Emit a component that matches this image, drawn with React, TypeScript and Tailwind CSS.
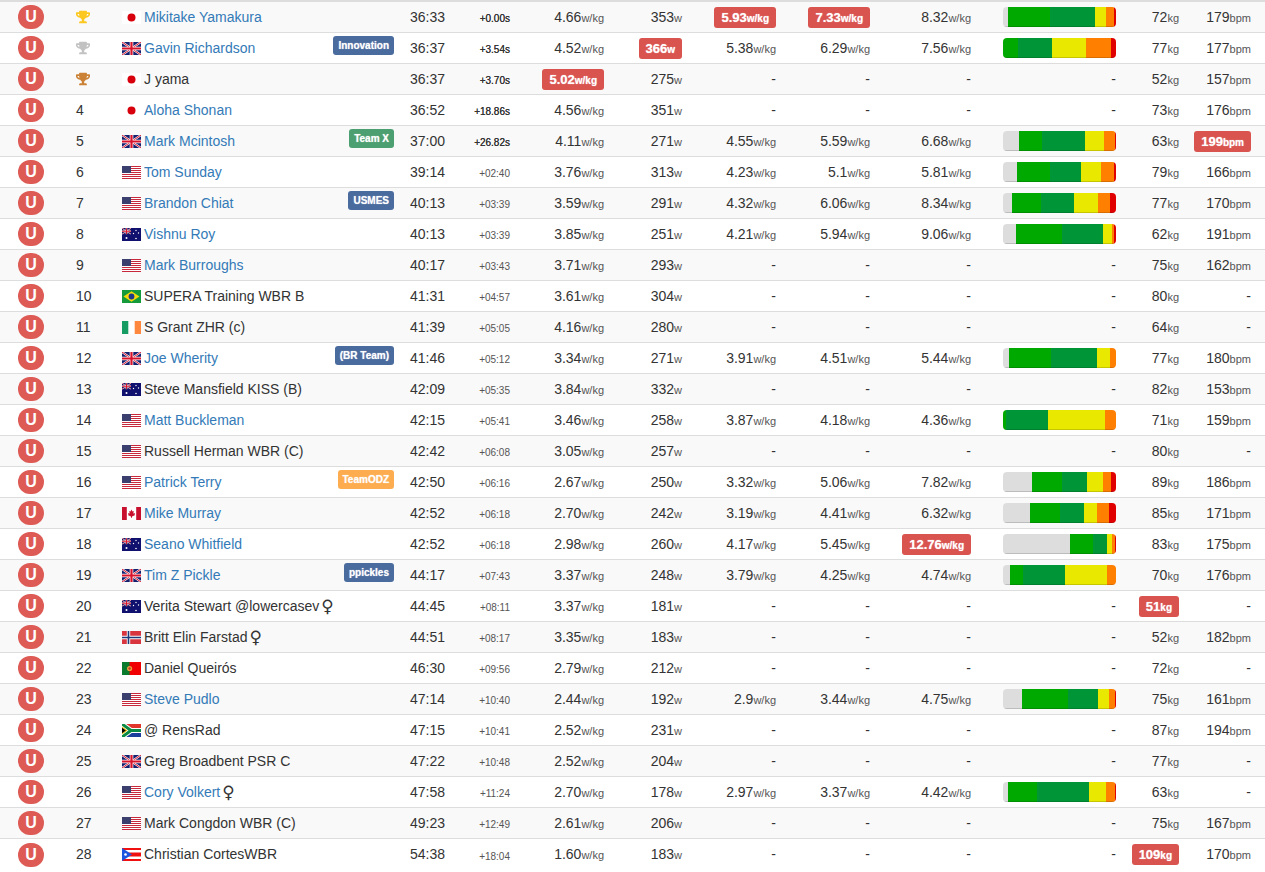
import type { ReactNode } from "react";
import { FaTrophy } from "react-icons/fa";

type Row = {
  name: string;
  flag: string;
  link?: boolean;
  female?: boolean;
  tag?: [string, string];
  time: string;
  gap: string;
  wkg: string;
  w: string;
  a?: string;
  b?: string;
  c?: string;
  bar?: number[];
  kg: string;
  bpm?: string;
};

const BLUE = "bg-[#4a6b9e]";
const GREEN = "bg-[#4c9f70]";
const ORANGE = "bg-[#fdad50]";

// a leading ! marks a value that shows as a red badge
const rows: Row[] = [
  { name: "Mikitake Yamakura", flag: "jp", link: true, time: "36:33", gap: "+0.00s", wkg: "4.66", w: "353", a: "!5.93", b: "!7.33", c: "8.32", bar: [15, 126, 135, 33, 24, 6], kg: "72", bpm: "179" },
  { name: "Gavin Richardson", flag: "gb", link: true, tag: ["Innovation", BLUE], time: "36:37", gap: "+3.54s", wkg: "4.52", w: "!366", a: "5.38", b: "6.29", c: "7.56", bar: [0, 44, 103, 102, 75, 15], kg: "77", bpm: "177" },
  { name: "J yama", flag: "jp", time: "36:37", gap: "+3.70s", wkg: "!5.02", w: "275", kg: "52", bpm: "157" },
  { name: "Aloha Shonan", flag: "jp", link: true, time: "36:52", gap: "+18.86s", wkg: "4.56", w: "351", kg: "73", bpm: "176" },
  { name: "Mark Mcintosh", flag: "gb", link: true, tag: ["Team X", GREEN], time: "37:00", gap: "+26.82s", wkg: "4.11", w: "271", a: "4.55", b: "5.59", c: "6.68", bar: [48, 69, 129, 57, 33, 3], kg: "63", bpm: "!199" },
  { name: "Tom Sunday", flag: "us", link: true, time: "39:14", gap: "+02:40", wkg: "3.76", w: "313", a: "4.23", b: "5.1", c: "5.81", bar: [42, 99, 93, 60, 39, 6], kg: "79", bpm: "166" },
  { name: "Brandon Chiat", flag: "us", link: true, tag: ["USMES", BLUE], time: "40:13", gap: "+03:39", wkg: "3.59", w: "291", a: "4.32", b: "6.06", c: "8.34", bar: [27, 87, 99, 72, 36, 18], kg: "77", bpm: "170" },
  { name: "Vishnu Roy", flag: "au", link: true, time: "40:13", gap: "+03:39", wkg: "3.85", w: "251", a: "4.21", b: "5.94", c: "9.06", bar: [39, 138, 123, 27, 6, 6], kg: "62", bpm: "191" },
  { name: "Mark Burroughs", flag: "us", link: true, time: "40:17", gap: "+03:43", wkg: "3.71", w: "293", kg: "75", bpm: "162" },
  { name: "SUPERA Training WBR B", flag: "br", time: "41:31", gap: "+04:57", wkg: "3.61", w: "304", kg: "80" },
  { name: "S Grant ZHR (c)", flag: "ie", time: "41:39", gap: "+05:05", wkg: "4.16", w: "280", kg: "64" },
  { name: "Joe Wherity", flag: "gb", link: true, tag: ["(BR Team)", BLUE], time: "41:46", gap: "+05:12", wkg: "3.34", w: "271", a: "3.91", b: "4.51", c: "5.44", bar: [18, 126, 138, 39, 18, 0], kg: "77", bpm: "180" },
  { name: "Steve Mansfield KISS (B)", flag: "au", time: "42:09", gap: "+05:35", wkg: "3.84", w: "332", kg: "82", bpm: "153" },
  { name: "Matt Buckleman", flag: "us", link: true, time: "42:15", gap: "+05:41", wkg: "3.46", w: "258", a: "3.87", b: "4.18", c: "4.36", bar: [0, 9, 126, 171, 33, 0], kg: "71", bpm: "159" },
  { name: "Russell Herman WBR (C)", flag: "us", time: "42:42", gap: "+06:08", wkg: "3.05", w: "257", kg: "80" },
  { name: "Patrick Terry", flag: "us", link: true, tag: ["TeamODZ", ORANGE], time: "42:50", gap: "+06:16", wkg: "2.67", w: "250", a: "3.32", b: "5.06", c: "7.82", bar: [87, 90, 75, 48, 24, 15], kg: "89", bpm: "186" },
  { name: "Mike Murray", flag: "ca", link: true, time: "42:52", gap: "+06:18", wkg: "2.70", w: "242", a: "3.19", b: "4.41", c: "6.32", bar: [81, 90, 72, 39, 36, 21], kg: "85", bpm: "171" },
  { name: "Seano Whitfield", flag: "au", link: true, time: "42:52", gap: "+06:18", wkg: "2.98", w: "260", a: "4.17", b: "5.45", c: "!12.76", bar: [201, 69, 42, 15, 9, 3], kg: "83", bpm: "175" },
  { name: "Tim Z Pickle", flag: "gb", link: true, tag: ["ppickles", BLUE], time: "44:17", gap: "+07:43", wkg: "3.37", w: "248", a: "3.79", b: "4.25", c: "4.74", bar: [21, 39, 126, 126, 27, 0], kg: "70", bpm: "176" },
  { name: "Verita Stewart @lowercasev", flag: "au", female: true, time: "44:45", gap: "+08:11", wkg: "3.37", w: "181", kg: "!51" },
  { name: "Britt Elin Farstad", flag: "no", female: true, time: "44:51", gap: "+08:17", wkg: "3.35", w: "183", kg: "52", bpm: "182" },
  { name: "Daniel Queirós", flag: "pt", time: "46:30", gap: "+09:56", wkg: "2.79", w: "212", kg: "72" },
  { name: "Steve Pudlo", flag: "us", link: true, time: "47:14", gap: "+10:40", wkg: "2.44", w: "192", a: "2.9", b: "3.44", c: "4.75", bar: [57, 138, 90, 33, 18, 3], kg: "75", bpm: "161" },
  { name: "@ RensRad", flag: "za", time: "47:15", gap: "+10:41", wkg: "2.52", w: "231", kg: "87", bpm: "194" },
  { name: "Greg Broadbent PSR C", flag: "gb", time: "47:22", gap: "+10:48", wkg: "2.52", w: "204", kg: "77" },
  { name: "Cory Volkert", flag: "us", link: true, female: true, time: "47:58", gap: "+11:24", wkg: "2.70", w: "178", a: "2.97", b: "3.37", c: "4.42", bar: [15, 87, 156, 51, 27, 3], kg: "63" },
  { name: "Mark Congdon WBR (C)", flag: "us", time: "49:23", gap: "+12:49", wkg: "2.61", w: "206", kg: "75", bpm: "167" },
  { name: "Christian CortesWBR", flag: "pr", time: "54:38", gap: "+18:04", wkg: "1.60", w: "183", kg: "!109", bpm: "170" },
];

const segColors = ["bg-[#dddddd]", "bg-[#00a900]", "bg-[#009637]", "bg-[#e8e800]", "bg-[#ff8000]", "bg-[#e00000]"];

const UK = () => (
  <>
    <rect width="19" height="13" fill="#14206e" />
    <path d="M0 0L19 13M19 0L0 13" stroke="#fff" strokeWidth="2" />
    <path d="M0 0L19 13M19 0L0 13" stroke="#d8142c" strokeWidth="1" />
    <path d="M9.5 0V13M0 6.5H19" stroke="#fff" strokeWidth="3.6" />
    <path d="M9.5 0V13M0 6.5H19" stroke="#d8142c" strokeWidth="2.2" />
  </>
);

const flags: Record<string, ReactNode> = {
  jp: (
    <>
      <rect width="19" height="13" fill="#fff" />
      <circle cx="9.5" cy="6.5" r="4" fill="#d8000c" />
    </>
  ),
  gb: <UK />,
  us: (
    <>
      <rect width="19" height="13" fill="#fff" />
      <path d="M0 .5H19M0 2.5H19M0 4.5H19M0 6.5H19M0 8.5H19M0 10.5H19M0 12.5H19" stroke="#c8283c" strokeWidth="1" />
      <rect width="9" height="7" fill="#3a3f6e" />
    </>
  ),
  au: (
    <>
      <rect width="19" height="13" fill="#10106e" />
      <svg width="9" height="6.5" viewBox="0 0 19 13">
        <UK />
      </svg>
      <circle cx="4.5" cy="10" r="1" fill="#fff" />
      <circle cx="14" cy="2.5" r=".7" fill="#fff" />
      <circle cx="11.5" cy="5.5" r=".7" fill="#fff" />
      <circle cx="16.5" cy="5" r=".7" fill="#fff" />
      <circle cx="14" cy="10.5" r=".8" fill="#fff" />
    </>
  ),
  br: (
    <>
      <rect width="19" height="13" fill="#159a3c" />
      <path d="M9.5 1.2L17.5 6.5L9.5 11.8L1.5 6.5Z" fill="#f5d90a" />
      <circle cx="9.5" cy="6.5" r="2.9" fill="#1f3a8a" />
    </>
  ),
  ie: (
    <>
      <rect width="19" height="13" fill="#fff" />
      <rect width="6.3" height="13" fill="#169b62" />
      <rect x="12.7" width="6.3" height="13" fill="#ff883e" />
    </>
  ),
  no: (
    <>
      <rect width="19" height="13" fill="#d8353f" />
      <path d="M6.5 0V13M0 6.5H19" stroke="#fff" strokeWidth="3.4" />
      <path d="M6.5 0V13M0 6.5H19" stroke="#1f3a78" strokeWidth="1.6" />
    </>
  ),
  pt: (
    <>
      <rect width="19" height="13" fill="#f00000" />
      <rect width="7.6" height="13" fill="#0a7a2c" />
      <circle cx="7.6" cy="6.5" r="2.6" fill="#e8a33c" />
      <circle cx="7.6" cy="6.5" r="1.2" fill="#c9342c" />
    </>
  ),
  za: (
    <>
      <rect width="19" height="6.5" fill="#e0362c" />
      <rect y="6.5" width="19" height="6.5" fill="#1c3f9e" />
      <path d="M0 0L9 6.5L0 13M9 6.5H19" stroke="#fff" strokeWidth="5" fill="none" />
      <path d="M0 0L9 6.5L0 13M9 6.5H19" stroke="#0a8a45" strokeWidth="3" fill="none" />
      <path d="M0 2.5L5.5 6.5L0 10.5Z" fill="#f5c518" />
      <path d="M0 3.7L3.8 6.5L0 9.3Z" fill="#000" />
    </>
  ),
  pr: (
    <>
      <rect width="19" height="13" fill="#f01010" />
      <path d="M0 3.25H19M0 9.75H19" stroke="#fff" strokeWidth="2.6" />
      <path d="M0 0L10 6.5L0 13Z" fill="#1a55e0" />
      <circle cx="3.5" cy="6.5" r="1.3" fill="#fff" />
    </>
  ),
  ca: (
    <>
      <rect width="19" height="13" fill="#fff" />
      <rect width="4.8" height="13" fill="#c8102e" />
      <rect x="14.2" width="4.8" height="13" fill="#c8102e" />
      <path d="M9.5 2.5L10.5 4.5L11.8 4L11.3 6.5L13 6L12.5 7.5L13.2 8L10 9.5V10.8H9V9.5L5.8 8L6.5 7.5L6 6L7.7 6.5L7.2 4L8.5 4.5Z" fill="#c8102e" />
    </>
  ),
};

function Value({ value, unit }: { value?: string; unit: string }) {
  if (!value) return <span>-</span>;
  if (value.startsWith("!")) {
    return (
      <span className="inline-block h-[21px] rounded-[3px] bg-[#d9534f] px-[7px] text-[13px] leading-[21px] font-bold text-white [text-shadow:0_0_1px_rgba(255,255,255,0.7)]">
        {value.slice(1)}
        <span className="text-[10px]">{unit}</span>
      </span>
    );
  }
  return (
    <>
      {value}
      <span className="text-[11px] text-[#555]">{unit}</span>
    </>
  );
}

function PowerBar({ segs }: { segs: number[] }) {
  return (
    <div className="relative flex h-[20px] w-[113px] overflow-hidden rounded-[4px]">
      {segs.map((s, i) =>
        s > 0 ? <div key={i} className={segColors[i]} style={{ width: `${s / 3}px` }} /> : null
      )}
      <div className="absolute inset-0 shadow-[inset_0_-1px_0_rgba(0,0,0,0.15)]" />
    </div>
  );
}

function Rank({ n }: { n: number }) {
  if (n === 1) return <FaTrophy size={14} className="text-[#fcc71e]" />;
  if (n === 2) return <FaTrophy size={14} className="text-[#c2c2c2]" />;
  if (n === 3) return <FaTrophy size={14} className="text-[#cb8236]" />;
  return <>{n}</>;
}

const cell = "border-b border-[#ddd] pr-2 text-right whitespace-nowrap";

export default function App() {
  return (
    <div className="h-[872px] overflow-hidden bg-white font-['Liberation_Sans',Arial,sans-serif] text-[14px] text-[#333]">
      <div className="h-[2px] bg-[#ddd]" />
      <table className="w-full table-fixed border-separate border-spacing-0 [&_tr:last-child_td]:border-b-0">
        <colgroup>
          <col className="w-[68px]" />
          <col className="w-[46px]" />
          <col className="w-[288px]" />
          <col className="w-[56px]" />
          <col className="w-[60px]" />
          <col className="w-[94px]" />
          <col className="w-[78px]" />
          <col className="w-[94px]" />
          <col className="w-[94px]" />
          <col className="w-[101px]" />
          <col className="w-[145px]" />
          <col className="w-[63px]" />
          <col className="w-[78px]" />
        </colgroup>
        <tbody>
          {rows.map((r, i) => (
            <tr key={i} className={`h-[31px] ${i % 2 === 0 ? "bg-[#f9f9f9]" : "bg-white"}`}>
              <td className="border-b border-[#ddd] pl-[18px]">
                <div className="flex h-[24px] w-[26px] items-center justify-center rounded-full bg-[#dd5a55] text-[16px] font-bold text-white">
                  U
                </div>
              </td>
              <td className="border-b border-[#ddd] pl-2">
                <Rank n={i + 1} />
              </td>
              <td className="border-b border-[#ddd] px-2">
                <div className="flex items-center">
                  <svg width="19" height="13" viewBox="0 0 19 13" className="mr-[3px] shrink-0">
                    {flags[r.flag]}
                  </svg>
                  <span className={r.link ? "text-[#337ab7]" : ""}>{r.name}</span>
                  {r.female && <span className="ml-[2px] font-['DejaVu_Sans',sans-serif] text-[17px] leading-none">♀</span>}
                  {r.tag && (
                    <span
                      className={`ml-auto mb-[5px] h-[19px] rounded-[3px] px-[5px] text-[10px] leading-[19px] font-bold text-white [text-shadow:0_0_1px_rgba(255,255,255,0.7)] ${r.tag[1]}`}
                    >
                      {r.tag[0]}
                    </span>
                  )}
                </div>
              </td>
              <td className="border-b border-[#ddd] pl-2">{r.time}</td>
              <td className={`${cell} pt-[3px] text-[10px] ${i < 5 ? "[text-shadow:0_0_0.5px_#333]" : "text-[#555]"}`}>{r.gap}</td>
              <td className={cell}>
                <Value value={r.wkg} unit="w/kg" />
              </td>
              <td className={cell}>
                <Value value={r.w} unit="w" />
              </td>
              <td className={cell}>
                <Value value={r.a} unit="w/kg" />
              </td>
              <td className={cell}>
                <Value value={r.b} unit="w/kg" />
              </td>
              <td className={cell}>
                <Value value={r.c} unit="w/kg" />
              </td>
              <td className="border-b border-[#ddd] pr-2 pl-6 text-right">
                {r.bar ? <PowerBar segs={r.bar} /> : "-"}
              </td>
              <td className={cell}>
                <Value value={r.kg} unit="kg" />
              </td>
              <td className="border-b border-[#ddd] pr-[14px] text-right whitespace-nowrap">
                <Value value={r.bpm} unit="bpm" />
              </td>
            </tr>
          ))}
        </tbody>
      </table>
    </div>
  );
}
